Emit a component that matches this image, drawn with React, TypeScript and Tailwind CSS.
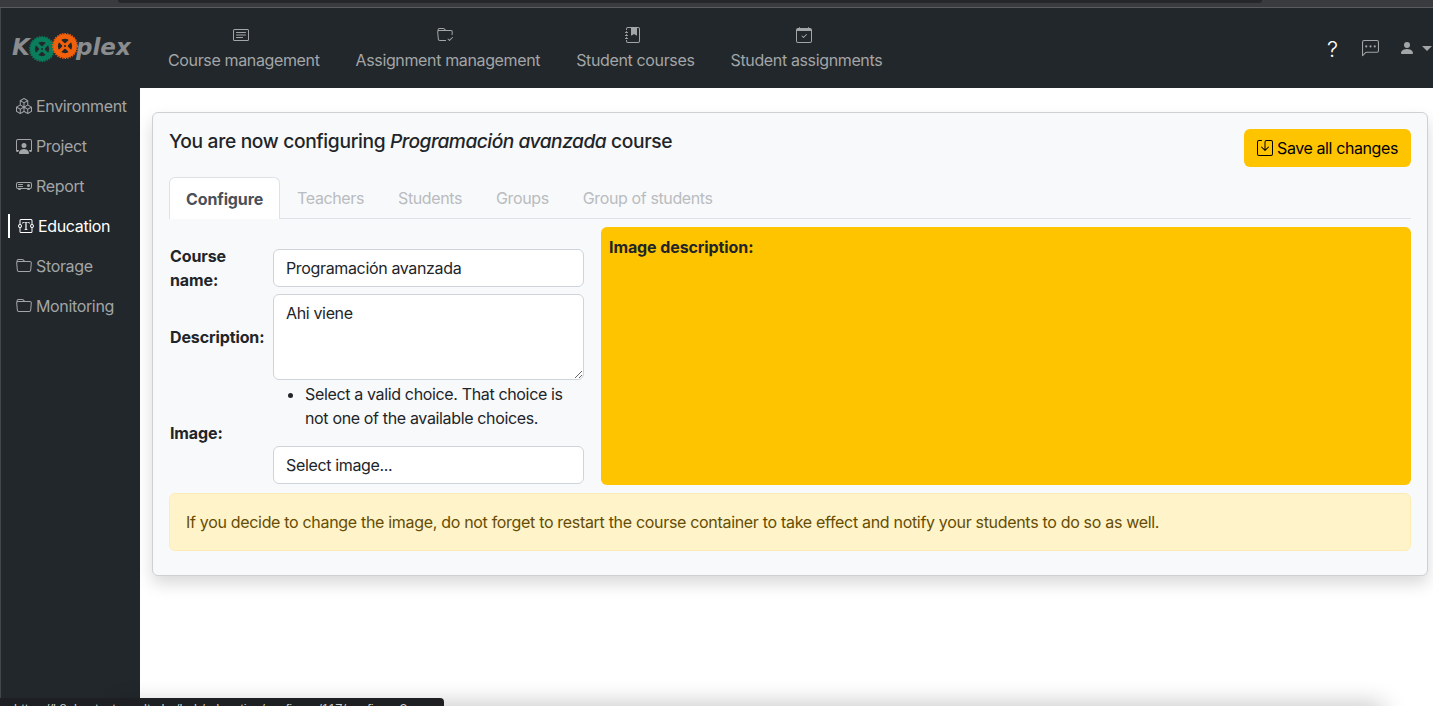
import {
  BsBoxes,
  BsCalendarCheck,
  BsCardText,
  BsChatLeftDots,
  BsFolder,
  BsFolderCheck,
  BsJournalBookmarkFill,
  BsPersonFill,
  BsPersonWorkspace,
  BsProjector,
  BsSave,
  BsTextareaT,
} from "react-icons/bs";

const topLinks = [
  { label: "Course management", icon: BsCardText },
  { label: "Assignment management", icon: BsFolderCheck },
  { label: "Student courses", icon: BsJournalBookmarkFill },
  { label: "Student assignments", icon: BsCalendarCheck },
];

const sideLinks = [
  { label: "Environment", icon: BsBoxes },
  { label: "Project", icon: BsPersonWorkspace },
  { label: "Report", icon: BsProjector },
  { label: "Education", icon: BsTextareaT, active: true },
  { label: "Storage", icon: BsFolder },
  { label: "Monitoring", icon: BsFolder },
];

const tabs = ["Teachers", "Students", "Groups", "Group of students"];

const Gear = ({ color }: { color: string }) => (
  <svg viewBox="0 0 24 24" className="w-[26px] h-[26px] shrink-0">
    <circle cx="12" cy="12" r="11.4" fill="none" stroke={color} strokeWidth="1.2" strokeDasharray="1.4 1" />
    <circle cx="12" cy="12" r="8.8" fill="none" stroke={color} strokeWidth="4.4" />
    <path d="M12 3v18M3 12h18" stroke={color} strokeWidth="3.2" transform="rotate(45 12 12)" />
    <circle cx="12" cy="12" r="2.6" fill={color} />
    <circle cx="12" cy="12" r="0.9" fill="#212529" />
  </svg>
);

const Logo = () => (
  <div className="flex items-center ml-[11px] text-[#8a8c8e] text-[23px] font-bold italic leading-none tracking-normal font-['DejaVu_Sans',sans-serif]">
    <span className="w-[17px]">K</span>
    <span className="w-[23px] mt-[2px]"><Gear color="#0a7d5c" /></span>
    <span className="w-[24px] mt-[-3px]"><Gear color="#f2600c" /></span>
    <span>plex</span>
  </div>
);

const Field = ({ children, className = "" }: { children: React.ReactNode; className?: string }) => (
  <div className={`w-[311px] bg-white border border-[#ced4da] rounded-[6px] px-[12px] py-[6px] text-[16px] leading-[24px] text-[#212529] ${className}`}>
    {children}
  </div>
);

export default function App() {
  return (
    <div className="relative h-[706px] overflow-hidden bg-white font-['Inter',sans-serif] text-[16px] leading-[24px] tracking-[-0.35px] text-[#212529]">
      <div className="h-[7px] bg-[#3a3b3f] flex">
        <div className="ml-[118px] w-[1144px] h-[3px] bg-[#26272b] rounded-b-[6px]" />
      </div>
      <div className="h-[1px] bg-[#5a5c5f]" />

      <nav className="h-[80px] bg-[#21272b] border-l border-l-[#43474b] flex items-center">
        <div className="w-[149px] shrink-0 mt-[-1px]">
          <Logo />
        </div>
        <div className="flex gap-[36px] ml-[18px] mt-[3px] tracking-[-0.36px]">
          {topLinks.map((link) => (
            <div key={link.label} className="flex flex-col items-center text-[#a3a5a7]">
              <link.icon className="w-[16px] h-[16px] mb-[5px] mr-[5px]" />
              <span>{link.label}</span>
            </div>
          ))}
        </div>
        <div className="ml-auto flex items-center text-[#a3a5a7]">
          <span className="text-white text-[22px] font-light w-[13px] mr-[22px] mt-[1px]">?</span>
          <BsChatLeftDots className="w-[17px] h-[17px] mr-[20px]" />
          <BsPersonFill className="w-[16px] h-[16px] mr-[7px]" />
          <span className="w-0 h-0 mr-[1px] border-x-[5px] border-x-transparent border-t-[5px] border-t-[#a3a5a7]" />
        </div>
      </nav>

      <div className="flex h-[618px]">
        <aside className="w-[140px] shrink-0 bg-[#21272b] border-l border-l-[#43474b]">
          {sideLinks.map((link) => (
            <div key={link.label} className={`h-[40px] pb-[4px] flex items-center ${link.active ? "text-white ml-[7px]" : "text-[#a3a5a7] ml-[15px]"}`}>
              {link.active && <span className="w-[2px] h-[24px] bg-white mr-[8px]" />}
              <link.icon className="w-[16px] h-[16px] mr-[4px]" />
              <span>{link.label}</span>
            </div>
          ))}
        </aside>

        <main className="flex-1 pt-[24px] pl-[12px] pr-[5px]">
          <div className="h-[464px] bg-[#f8f9fa] border border-[#ced0d3] rounded-[6px] shadow-[0_8px_16px_rgba(0,0,0,0.15)] px-[16px] pt-[16px]">
            <div className="flex justify-between">
              <h1 className="text-[19.2px] leading-[24px] font-medium tracking-[-0.33px]">
                You are now configuring <i className="tracking-[-0.5px]">Programación avanzada</i> course
              </h1>
              <button className="h-[38px] px-[13px] bg-[#ffc400] rounded-[6px] text-black tracking-[-0.4px] flex items-center gap-[4px]">
                <BsSave className="w-[16px] h-[16px]" />
                Save all changes
              </button>
            </div>

            <div className="flex mt-[10px] border-b border-[#dee2e6] h-[42px]">
              <div className="h-[42px] px-[16px] bg-white border border-[#dee2e6] border-b-0 rounded-t-[6px] font-bold tracking-[-0.12px] text-[#495057] flex items-center">
                Configure
              </div>
              {tabs.map((tab) => (
                <div key={tab} className="px-[17px] tracking-[-0.38px] text-[#b9bcc0] flex items-center">{tab}</div>
              ))}
            </div>

            <div className="flex gap-[17px] mt-[8px]">
              <div className="w-[415px] shrink-0 flex">
                <div className="w-[104px] shrink-0 pl-[1px] font-bold tracking-[-0.12px] text-[#212529]">
                  <div className="pt-[17px] h-[67px]">Course<br />name:</div>
                  <div className="pt-[31px] h-[98px]">Description:</div>
                  <div className="pt-[29px]">Image:</div>
                </div>
                <div className="pt-[22px]">
                  <Field>Programación avanzada</Field>
                  <textarea
                    readOnly
                    value="Ahi viene"
                    className="block mt-[7px] w-[311px] h-[86px] bg-white border border-[#ced4da] rounded-[6px] px-[12px] py-[6px] outline-none"
                  />
                  <ul className="list-disc pl-[32px] w-[311px] mt-[2px] text-[#212529]">
                    <li>Select a valid choice. That choice is not one of the available choices.</li>
                  </ul>
                  <Field className="mt-[16px]">Select image...</Field>
                </div>
              </div>
              <div className="flex-1 h-[258px] bg-[#ffc400] rounded-[6px] p-[8px] font-bold tracking-[-0.1px]">
                Image description:
              </div>
            </div>

            <div className="mt-[8px] h-[58px] bg-[#fff3c9] border border-[#ffecb5] rounded-[6px] px-[16px] flex items-center tracking-[-0.315px] text-[#664d03]">
              If you decide to change the image, do not forget to restart the course container to take effect and notify your students to do so as well.
            </div>
          </div>
        </main>
      </div>

      <div className="absolute left-[120px] right-[50px] bottom-[-16px] h-[16px] shadow-[0_0_24px_rgba(0,0,0,0.3)]" />
      <div className="absolute left-0 bottom-0 w-[444px] h-[8px] bg-[#1d1f22] rounded-tr-[4px] overflow-hidden text-[#c9cacb] text-[13px] leading-[14px] tracking-normal whitespace-nowrap pl-[14px] pt-[4px] font-['Liberation_Sans',sans-serif]">
        https://k8plex-test.vo.elte.hu/hub/education/configure/117/configure?
      </div>
    </div>
  );
}
